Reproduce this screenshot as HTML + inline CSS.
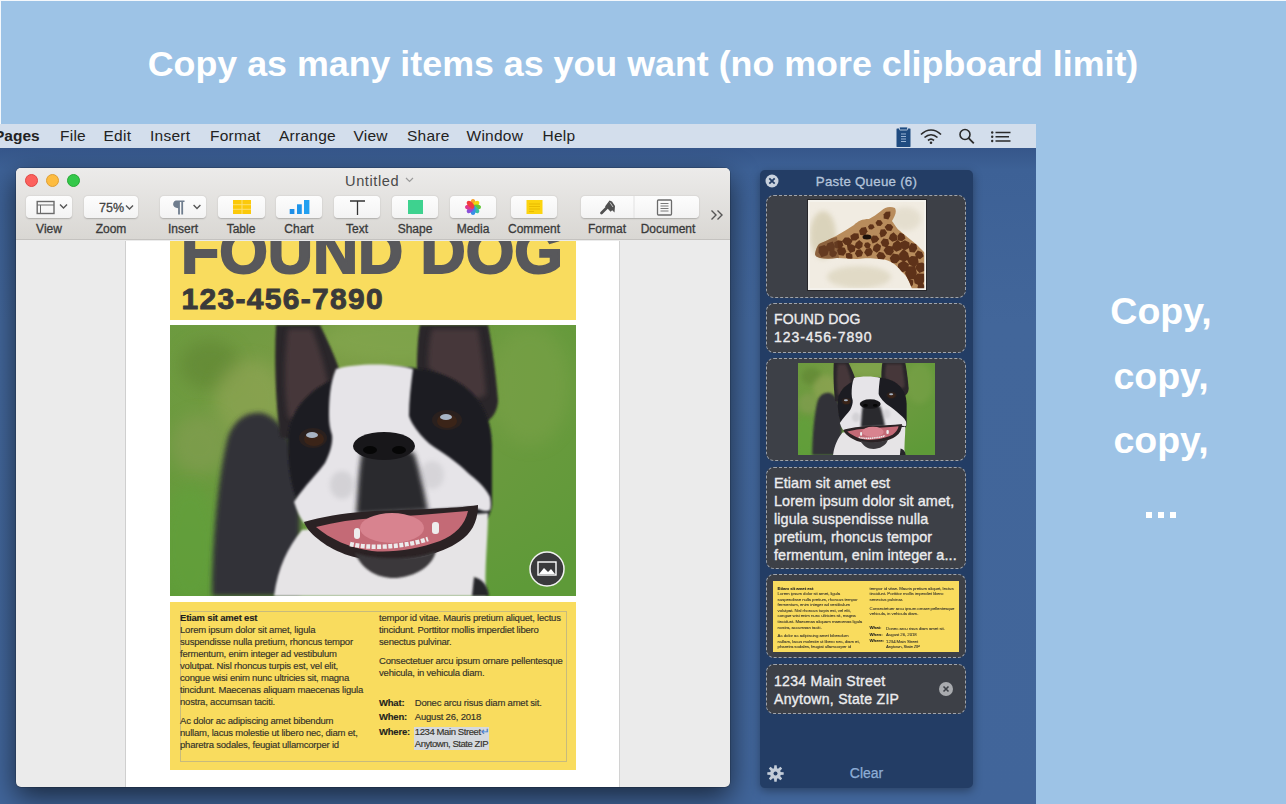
<!DOCTYPE html>
<html><head><meta charset="utf-8">
<style>
*{margin:0;padding:0;box-sizing:border-box}
html,body{width:1286px;height:804px;overflow:hidden}
body{position:relative;background:#9dc3e6;font-family:"Liberation Sans",sans-serif;}
#wl{position:absolute;left:0;top:0;width:1px;height:804px;background:#f4f8fc}#wt{position:absolute;left:0;top:0;width:1286px;height:1px;background:#f4f8fc}
.abs{position:absolute}
.ytxt{position:absolute;font-size:9.5px;letter-spacing:-0.2px;line-height:12px;color:#34322a;white-space:nowrap;-webkit-text-stroke:0.15px #34322a;margin-top:0.8px}
.ytxt b{color:#1c1c1c}
.ptxt{position:absolute;left:7px;font-size:14.4px;line-height:18.2px;color:#ececee;white-space:nowrap;letter-spacing:0.1px;-webkit-text-stroke:0.35px #ececee}

.tl{position:absolute;top:6px;width:13px;height:13px;border-radius:50%;border:0.5px solid}
.ttl{position:absolute;left:329px;top:5px;white-space:nowrap;font-size:14.6px;letter-spacing:0.6px;color:#4a4a4a;line-height:16px}
.btn{position:absolute;top:28px;height:22px;border-radius:4px;background:linear-gradient(180deg,#fdfdfd,#f3f3f3);box-shadow:0 0.5px 1.5px rgba(0,0,0,.22)}
.btn svg{display:block}
.btxt{position:absolute;top:3px;font-size:12.5px;color:#444;line-height:16px}
.lbl{position:absolute;top:54px;width:0;white-space:nowrap;font-size:12px;color:#3a3a3a;-webkit-text-stroke:0.3px #3a3a3a;line-height:14px;display:flex;justify-content:center}

#title{position:absolute;left:0;top:42px;width:1286px;text-align:center;color:#fff;font-weight:bold;font-size:35.8px;line-height:44px}
#screen{position:absolute;left:0;top:124px;width:1036px;height:680px;background:linear-gradient(180deg,#36568a 24px,#3d6196 46px,#42669a 200px,#41659a 100%)}
#menubar{position:absolute;left:0;top:0;width:1036px;height:24px;background:#d3deec;color:#222;font-size:15.5px;letter-spacing:0.25px;line-height:24px}
#menubar span{position:absolute;top:0}
#win{position:absolute;left:16px;top:44px;width:714px;height:619px;border-radius:5px;background:#ebebeb;overflow:hidden;box-shadow:0 10px 28px rgba(0,0,0,.6),0 0 0 0.5px rgba(0,0,0,.3)}
#tb{position:absolute;left:0;top:0;width:714px;height:72px;background:linear-gradient(180deg,#ecebea,#d9d7d3);border-bottom:1px solid #c4c2bf}
#page{position:absolute;left:109px;top:73px;width:495px;height:546px;background:#fff;overflow:hidden;border-left:1px solid #cfcfcf;border-right:1px solid #d2d2d2}
#pq{position:absolute;left:760px;top:46px;width:213px;height:618px;background:#233d65;border-radius:5px;box-shadow:0 3px 10px rgba(0,0,0,.35)}
.card{position:absolute;left:6px;width:200px;background:#3d4047;border:1px dashed #a0a4ab;border-radius:8px}
.rt{position:absolute;left:1061px;width:200px;text-align:center;color:#fff;font-weight:bold;font-size:37.5px;line-height:44px}
</style></head><body>
<svg width="0" height="0" style="position:absolute">
<defs>
<filter id="bl8" x="-30%" y="-30%" width="160%" height="160%"><feGaussianBlur stdDeviation="8"/></filter>
<filter id="bl3" x="-30%" y="-30%" width="160%" height="160%"><feGaussianBlur stdDeviation="2.5"/></filter>
<filter id="bl1"><feGaussianBlur stdDeviation="1"/></filter>
<radialGradient id="grass" cx="0.4" cy="0.2" r="0.9"><stop offset="0" stop-color="#7c9c46"/><stop offset="0.55" stop-color="#6a9a3e"/><stop offset="1" stop-color="#5e9a38"/></radialGradient>
<g id="dogimg">
  <rect width="406" height="271" fill="url(#grass)"/>
  <ellipse cx="40" cy="40" rx="30" ry="25" fill="#5e8432" opacity=".6" filter="url(#bl8)"/><ellipse cx="80" cy="75" rx="35" ry="40" fill="#93a656" opacity=".6" filter="url(#bl8)"/><ellipse cx="30" cy="120" rx="30" ry="30" fill="#8a9e56" opacity=".5" filter="url(#bl8)"/>
  <ellipse cx="230" cy="15" rx="80" ry="25" fill="#8aab52" opacity=".5" filter="url(#bl8)"/>
  <ellipse cx="360" cy="60" rx="40" ry="60" fill="#7ca24a" opacity=".5" filter="url(#bl8)"/>
  <ellipse cx="20" cy="220" rx="30" ry="60" fill="#62a03a" opacity=".7" filter="url(#bl8)"/>
  <!-- blurred body -->
  <path d="M42 271 C42 220 48 150 58 112 C64 94 78 86 92 88 C110 92 126 118 130 150 L130 271Z" fill="#323238" filter="url(#bl3)"/>
  
  <!-- ears -->
  <path d="M106 0 L150 0 C160 20 168 40 172 52 L166 92 C150 108 128 118 110 112 C106 80 104 40 106 0Z" fill="#29252a" filter="url(#bl1)"/>
  <path d="M118 4 L142 4 C150 25 156 45 158 60 L152 88 C140 96 126 98 118 92 C114 65 114 35 118 4Z" fill="#4c3b3d" opacity=".85" filter="url(#bl3)"/>
  <path d="M250 0 L318 0 C322 20 326 50 328 76 C327 88 322 93 316 97 L247 44 C247 25 248 10 250 0Z" fill="#29252a" filter="url(#bl1)"/>
  <path d="M262 4 L308 4 C312 28 315 50 316 70 L296 78 L258 42 C258 28 259 15 262 4Z" fill="#4c3b3d" opacity=".85" filter="url(#bl3)"/>
  <!-- head black -->
  <path d="M118 120 C116 80 150 44 225 42 C290 42 322 75 322 120 L322 180 C320 190 318 195 310 196 L150 202 C128 192 118 160 118 120Z" fill="#1f1e22" filter="url(#bl1)"/>
  <!-- chest white -->
  <path d="M104 271 C108 242 118 222 132 205 L318 188 C318 215 314 245 316 271Z" fill="#e6e4e6" filter="url(#bl1)"/>
  <path d="M304 252 C312 254 318 260 319 271 L302 271Z" fill="#25252a" filter="url(#bl1)"/>
  <!-- white blaze + muzzle -->
  <path d="M166 44 C185 38 225 38 243 44 C241 60 239 75 239 91 C241 97 244 101 246 104 C252 112 258 118 264 122 C280 132 290 140 297 147 C306 155 314 160 320 172 C321 178 321 182 320 185 C316 188 310 184 300 182 L203 188 L134 198 C128 190 126 182 124 177 C135 160 148 148 155 138 C160 128 163 118 162 110 C160 104 159 98 159 91 C159 75 160 58 166 44Z" fill="#e6e4e8" filter="url(#bl1)"/>
  <!-- dark snout center -->
  <path d="M192 126 C204 122 234 122 244 128 C250 145 254 165 258 186 L186 190 C188 168 188 148 192 126Z" fill="#2a292d" filter="url(#bl3)"/>
  <ellipse cx="172" cy="160" rx="12" ry="14" fill="#a8a8ac" opacity=".3" filter="url(#bl3)"/>
  <ellipse cx="262" cy="150" rx="12" ry="14" fill="#a8a8ac" opacity=".25" filter="url(#bl3)"/>
  <!-- nose -->
  <ellipse cx="214" cy="121" rx="31" ry="14" fill="#18171a"/>
  <ellipse cx="200" cy="125" rx="7" ry="4" fill="#060606"/><ellipse cx="229" cy="125" rx="7" ry="4" fill="#060606"/>
  <!-- eyes -->
  <ellipse cx="143" cy="113" rx="14" ry="10" fill="#2a201e"/><ellipse cx="144" cy="114" rx="10" ry="7" fill="#3b2418"/><ellipse cx="142" cy="110" rx="6" ry="3" fill="#a8b4c4"/>
  <ellipse cx="277" cy="95" rx="15" ry="10" fill="#2a201e"/><ellipse cx="277" cy="96" rx="10" ry="7" fill="#3b2418"/><ellipse cx="276" cy="92" rx="6" ry="3" fill="#a8b4c4"/>
  <!-- mouth -->
  <path d="M134 197 C150 192 175 188 192 187 C215 185 240 185 260 184 C280 183 295 182 308 180 C308 196 302 208 290 216 C270 230 240 236 210 236 C185 235 162 226 148 214 C140 208 136 202 134 197Z" fill="#2b2224"/>
  <path d="M146 202 C165 197 185 194 205 193 C235 191 265 189 298 186 C295 200 285 210 270 216 C248 224 222 228 202 226 C180 223 160 214 146 202Z" fill="#c46a76"/>
  <ellipse cx="222" cy="203" rx="32" ry="15" fill="#d8838f"/>
  <path d="M180 219 C200 224 235 222 258 214" stroke="#ecebec" stroke-width="4.5" fill="none" stroke-dasharray="4 1.5"/>
  <rect x="262" y="197" width="7" height="12" rx="3" fill="#eeeded"/><rect x="184" y="203" width="6" height="11" rx="3" fill="#eeeded"/>
  <path d="M185 228 C210 236 248 234 266 226 C262 244 240 253 224 253 C206 253 192 244 185 228Z" fill="#3b383b" filter="url(#bl1)"/>
</g>
<g id="girimg">
  <rect width="116" height="88" fill="#f1ece2"/>
  <ellipse cx="14" cy="34" rx="13" ry="24" fill="#c9c09c" opacity=".55" filter="url(#bl3)"/>
  <ellipse cx="50" cy="76" rx="32" ry="11" fill="#d4ccb0" opacity=".55" filter="url(#bl3)"/>
  <ellipse cx="96" cy="18" rx="16" ry="12" fill="#ddd6c2" opacity=".6" filter="url(#bl3)"/>
  <clipPath id="gclip"><path d="M6 53 C7 47 9 43 12 42 C18 40 22 37 27 35 C34 31 40 27 45 24 C49 20 53 18 60 18 C64 16 68 13 72 10 C76 6 81 5 86 7 C88 11 86 15 83 20 C86 24 88 28 91 30 C96 34 102 39 108 44 C112 48 114 50 116 52 L116 88 L103 88 C100 79 97 74 93 71 C89 66 86 63 82 61 C78 59 75 58 70 58 C62 57 56 57 48 58 C40 58 34 57 28 57 C22 58 16 58 11 57 C8 56 6 55 6 53Z"/></clipPath>
  <g clip-path="url(#gclip)">
  <rect width="116" height="88" fill="#b88c5c"/>
  <g fill="#5e3219"><polygon points="9.6,45.7 15.5,43.9 20.3,48.2 18.4,54.3 12.4,56.3 9.6,51.2"/><polygon points="16.4,47.2 18.5,42.2 23.7,40.6 26.0,45.1 25.3,49.6 20.7,50.2"/><polygon points="25.1,41.6 29.0,39.2 33.1,40.0 34.3,44.2 31.4,48.5 26.1,46.8"/><polygon points="41.0,44.6 36.1,43.7 32.9,40.2 35.8,36.5 39.8,36.5 43.6,39.7"/><polygon points="46.9,39.6 42.4,39.5 41.3,34.7 45.0,32.3 49.5,32.5 50.1,37.1"/><polygon points="52.4,26.7 56.8,25.9 58.5,30.3 56.2,34.5 51.3,34.0 50.1,29.7"/><polygon points="60.1,28.3 59.0,25.5 61.0,23.3 64.1,23.5 65.6,26.6 63.0,28.6"/><polygon points="68.6,19.1 71.8,19.3 73.9,22.3 71.5,25.1 68.2,24.7 66.5,21.8"/><polygon points="77.0,10.7 81.4,10.4 81.3,14.8 79.3,18.4 74.7,17.5 74.7,13.2"/><polygon points="24.9,49.1 28.2,51.8 26.5,55.3 23.2,56.3 20.5,54.0 20.4,49.6"/><polygon points="34.6,54.7 29.6,54.0 27.8,49.0 31.6,46.0 35.8,46.8 37.4,50.8"/><polygon points="42.6,43.3 46.6,45.2 45.9,50.2 41.2,52.1 38.6,48.3 37.9,43.7"/><polygon points="53.3,46.1 49.8,48.4 45.6,46.2 46.7,41.9 50.2,39.1 53.8,42.0"/><polygon points="56.8,47.0 55.0,44.4 56.2,41.7 59.1,41.2 61.7,43.5 60.6,47.3"/><polygon points="67.8,40.9 63.6,42.4 61.7,38.1 63.9,34.6 67.8,34.7 70.4,37.9"/><polygon points="75.9,28.3 78.1,31.8 75.9,34.9 71.8,36.4 70.6,32.2 71.7,28.5"/><polygon points="81.8,23.2 84.3,26.1 82.2,30.1 77.8,29.5 75.6,25.9 78.4,23.1"/><polygon points="37.1,56.3 36.7,52.5 40.4,51.7 43.3,53.6 43.5,57.6 39.5,59.1"/><polygon points="54.1,51.4 52.6,55.3 48.3,56.3 45.9,52.6 47.6,49.0 51.5,48.2"/><polygon points="62.4,54.2 58.1,55.6 55.1,51.6 57.3,47.5 61.6,47.1 63.9,50.5"/><polygon points="71.2,49.0 67.8,51.7 63.7,49.3 64.6,44.9 68.2,42.3 72.1,44.8"/><polygon points="74.4,37.5 79.2,38.2 80.2,42.7 77.7,46.6 73.4,45.1 71.6,41.2"/><polygon points="84.6,31.2 87.8,34.4 88.2,39.2 83.4,40.7 79.7,37.8 81.1,33.8"/><polygon points="88.4,34.9 91.0,31.6 95.0,33.2 96.5,37.4 93.0,40.3 88.6,39.2"/><polygon points="69.4,58.6 67.4,54.6 70.0,50.7 74.3,51.8 76.8,55.4 74.0,59.4"/><polygon points="77.8,44.6 83.5,45.4 84.9,50.7 81.9,54.6 77.4,53.4 74.5,49.3"/><polygon points="92.9,43.0 92.6,48.5 87.3,50.7 82.6,47.2 84.3,42.2 88.7,39.1"/><polygon points="91.4,41.5 95.9,39.3 100.4,41.4 100.8,46.6 96.1,49.2 91.4,46.7"/><polygon points="108.2,47.7 105.6,51.5 100.7,51.0 99.7,46.2 102.2,42.1 107.3,43.0"/><polygon points="114.7,55.3 111.1,58.2 107.2,56.8 106.0,52.9 108.8,49.6 113.0,51.0"/><polygon points="87.6,62.3 82.5,62.3 80.7,57.1 84.0,52.5 89.7,53.5 90.9,58.8"/><polygon points="99.1,52.1 100.5,57.6 95.5,60.7 90.0,58.5 90.2,52.7 94.4,47.9"/><polygon points="100.4,63.7 97.6,58.3 102.6,54.9 108.5,55.4 109.7,61.5 105.7,66.3"/><polygon points="118.1,64.3 115.8,69.8 110.4,72.1 106.3,67.6 108.2,62.3 113.2,61.4"/><polygon points="89.3,62.8 94.5,59.4 100.0,63.1 98.8,69.3 93.6,71.3 88.2,68.8"/><polygon points="107.9,72.0 105.6,78.2 98.3,78.3 96.0,72.0 98.4,65.6 106.1,65.0"/><polygon points="105.6,82.3 104.6,76.5 108.5,72.4 115.3,72.7 115.8,79.6 111.9,85.2"/><polygon points="104.4,79.4 103.9,84.1 100.1,87.8 95.8,84.5 95.9,79.7 99.9,77.5"/><polygon points="116.2,85.6 114.2,89.1 110.3,89.8 108.5,86.4 109.4,82.4 113.7,82.3"/></g>
  <path d="M4 40 L28 36 L30 58 L4 58Z" fill="#6a4228" opacity=".55"/>
  </g>
  <ellipse cx="58" cy="36" rx="4.5" ry="2.5" fill="#1a100a"/>
  <rect x="0" y="0" width="116" height="88" fill="none" stroke="#f5f3ee" stroke-width="1.5"/>
</g>

</defs></svg>
<div id="wl"></div><div id="wt"></div>
<div id="title">Copy as many items as you want (no more clipboard limit)</div>

<div id="screen">
  <div id="menubar">
    <span style="left:-6px;font-weight:bold;letter-spacing:0">Pages</span>
    <span style="left:60px">File</span>
    <span style="left:103.5px">Edit</span>
    <span style="left:150px">Insert</span>
    <span style="left:210px">Format</span>
    <span style="left:279px">Arrange</span>
    <span style="left:353.5px">View</span>
    <span style="left:407px">Share</span>
    <span style="left:466.5px">Window</span>
    <span style="left:542.5px">Help</span>
    <svg class="abs" style="left:895px;top:1px" width="18" height="22">
      <rect x="1.5" y="3.5" width="14" height="18.5" rx="0.4" fill="#1f4b80"/>
      <rect x="4.5" y="2" width="8" height="3" rx="0.5" fill="#1f4b80" stroke="#d3deec" stroke-width="0.8"/>
      <path d="M6 9H11M6 11.5H11M6 14H11M6 16.5H11" stroke="#9ab4d4" stroke-width="1.1"/>
    </svg>
    <svg class="abs" style="left:919px;top:3px" width="24" height="18">
      <path d="M2 7.5C8 1.5 16 1.5 22 7.5" stroke="#2a2a2a" stroke-width="1.7" fill="none"/>
      <path d="M5.5 10.5C9.5 6.8 14.5 6.8 18.5 10.5" stroke="#2a2a2a" stroke-width="1.7" fill="none"/>
      <path d="M9 13.5C11 11.8 13 11.8 15 13.5" stroke="#2a2a2a" stroke-width="1.7" fill="none"/>
      <circle cx="12" cy="15.8" r="1.3" fill="#2a2a2a"/>
    </svg>
    <svg class="abs" style="left:958px;top:3px" width="18" height="18">
      <circle cx="7" cy="7.5" r="5" stroke="#2a2a2a" stroke-width="1.6" fill="none"/>
      <path d="M10.6 11.1L15.8 16.3" stroke="#2a2a2a" stroke-width="1.8"/>
    </svg>
    <svg class="abs" style="left:990px;top:6px" width="22" height="13">
      <circle cx="2.2" cy="2.5" r="1.2" fill="#2a2a2a"/><circle cx="2.2" cy="6.8" r="1.2" fill="#2a2a2a"/><circle cx="2.2" cy="11" r="1.2" fill="#2a2a2a"/>
      <path d="M5.5 2.5H20.5M5.5 6.8H19M5.5 11H20.5" stroke="#2a2a2a" stroke-width="1.6"/>
    </svg>
  </div>
  <div id="win">
    <div id="tb">
      <div class="tl" style="left:9px;background:#fc615d;border-color:#df4744"></div>
      <div class="tl" style="left:30px;background:#fdbc40;border-color:#de9f34"></div>
      <div class="tl" style="left:51px;background:#34c84a;border-color:#27aa35"></div>
      <div class="ttl">Untitled<svg width="9" height="6" style="margin-left:6px;vertical-align:3px"><path d="M1 1L4.5 4.5L8 1" stroke="#9a9a9a" stroke-width="1.2" fill="none"/></svg></div>
      <div class="btn" style="left:10px;width:46px"><svg width="46" height="22"><rect x="11.2" y="5.5" width="16.8" height="12" fill="none" stroke="#6b6b6b" stroke-width="1.4"/><line x1="11" y1="9" x2="28" y2="9" stroke="#6b6b6b" stroke-width="1.1"/><line x1="14.5" y1="9" x2="14.5" y2="17.5" stroke="#6b6b6b" stroke-width="1"/><path d="M34 8.5L37.5 12L41 8.5" stroke="#555" stroke-width="1.4" fill="none"/></svg></div>
      <div class="btn" style="left:68px;width:54px"><span class="btxt" style="left:15px;top:4px;-webkit-text-stroke:0.3px #444">75%</span><svg width="54" height="22" style="position:absolute;left:0;top:0"><path d="M42 9.5L45.5 13L49 9.5" stroke="#555" stroke-width="1.4" fill="none"/></svg></div>
      <div class="btn" style="left:144px;width:46px"><svg width="46" height="22"><path transform="translate(-2.5,0)" d="M18.5 4.5H27V6H25.6V18.5H23.8V6H22.4V18.5H20.6V12.2C17.6 12.2 15.6 10.6 15.6 8.3C15.6 6 17.4 4.5 18.5 4.5Z" fill="#6f7d8e"/><path d="M33.6 9L37 12.4L40.4 9" stroke="#555" stroke-width="1.4" fill="none"/></svg></div>
      <div class="btn" style="left:202px;width:47px"><svg width="47" height="22"><rect x="15" y="4" width="18" height="14" fill="#fbc90a"/><path d="M15 8.7H33M15 13.3H33M24 4V18" stroke="#fde070" stroke-width="1"/></svg></div>
      <div class="btn" style="left:260px;width:46px"><svg width="46" height="22"><rect x="13.7" y="13" width="4.7" height="5" fill="#1e8ee6"/><rect x="21" y="8.3" width="4.8" height="9.7" fill="#1f95ea"/><rect x="28" y="4" width="5.4" height="14" fill="#22a0f0"/></svg></div>
      <div class="btn" style="left:318px;width:46px"><svg width="46" height="22"><path d="M16 5H31M23.5 5V19" stroke="#333" stroke-width="1.3" fill="none"/></svg></div>
      <div class="btn" style="left:376px;width:46px"><svg width="46" height="22"><rect x="16" y="4" width="15" height="14" fill="#3ed28f"/></svg></div>
      <div class="btn" style="left:434px;width:46px"><svg width="46" height="22"><g transform="translate(23,11)"><circle r="7.5" fill="#fff"/><ellipse rx="2.6" ry="4.5" cy="-3.5" fill="#f6a12c" transform="rotate(0)"/><ellipse rx="2.6" ry="4.5" cy="-3.5" fill="#f2d70c" transform="rotate(45)"/><ellipse rx="2.6" ry="4.5" cy="-3.5" fill="#62c63a" transform="rotate(90)"/><ellipse rx="2.6" ry="4.5" cy="-3.5" fill="#38c2a4" transform="rotate(135)"/><ellipse rx="2.6" ry="4.5" cy="-3.5" fill="#3a8ee8" transform="rotate(180)"/><ellipse rx="2.6" ry="4.5" cy="-3.5" fill="#8a50d8" transform="rotate(225)"/><ellipse rx="2.6" ry="4.5" cy="-3.5" fill="#e0388c" transform="rotate(270)"/><ellipse rx="2.6" ry="4.5" cy="-3.5" fill="#f23c3c" transform="rotate(315)"/></g></svg></div>
      <div class="btn" style="left:495px;width:46px"><svg width="46" height="22"><rect x="15.5" y="4" width="16" height="14" fill="#fcd40f"/><path d="M18 8H29M18 10.5H29M18 13H29M18 15.5H23" stroke="#e6b800" stroke-width="0.9"/></svg></div>
      <div class="btn" style="left:565px;width:118px"><svg width="118" height="22"><line x1="53" y1="0" x2="53" y2="22" stroke="#e2e2e2" stroke-width="1"/><path d="M20.5 17L25.5 12" stroke="#505050" stroke-width="2.8" stroke-linecap="round"/><path d="M24 10.5L28.5 4.5L31 5.5L34 10L33.5 16.5L31.2 14.2L29.6 15.8L27 13Z" fill="#505050"/><path d="M29 6.5L32 11" stroke="#f6f6f6" stroke-width="0.7"/><rect x="76.5" y="4" width="14" height="15" fill="none" stroke="#6b6b6b" stroke-width="1.3" rx="1"/><path d="M79.5 7.5H87.5M79.5 10H87.5M79.5 12.5H87.5M79.5 15H87.5" stroke="#6b6b6b" stroke-width="0.9"/></svg></div>
      <svg class="abs" style="left:694px;top:41px" width="16" height="13"><path d="M1.5 1.5L6 6L1.5 10.5M7.5 1.5L12 6L7.5 10.5" stroke="#555" stroke-width="1.4" fill="none"/></svg>
      <div class="lbl" style="left:33px">View</div>
      <div class="lbl" style="left:95px">Zoom</div>
      <div class="lbl" style="left:167px">Insert</div>
      <div class="lbl" style="left:225px">Table</div>
      <div class="lbl" style="left:283px">Chart</div>
      <div class="lbl" style="left:341px">Text</div>
      <div class="lbl" style="left:399px">Shape</div>
      <div class="lbl" style="left:457px">Media</div>
      <div class="lbl" style="left:518px">Comment</div>
      <div class="lbl" style="left:591px">Format</div>
      <div class="lbl" style="left:652px">Document</div>
    </div>
    <div id="page">
      <div class="abs" style="left:44px;top:-20px;width:406px;height:99px;background:#f9dc5e"></div>
      <div class="abs" style="left:55px;top:-25px;font-size:62.5px;font-weight:bold;color:#58585b;-webkit-text-stroke:2px #58585b;line-height:70px;white-space:nowrap">FOUND DOG</div>
      <div class="abs" style="left:55.5px;top:41px;font-size:30px;font-weight:bold;letter-spacing:1.3px;color:#3a3a3a;-webkit-text-stroke:0.9px #3a3a3a;line-height:34px;white-space:nowrap">123-456-7890</div>
      <div class="abs" style="left:44px;top:84px;width:406px;height:271px;overflow:hidden"><svg width="406" height="271"><use href="#dogimg"/><!-- image badge -->
  <circle cx="377" cy="244" r="17" fill="#3a3a3c" stroke="#f2f2f2" stroke-width="1.5"/>
  <rect x="368" y="237" width="18" height="13" fill="none" stroke="#fff" stroke-width="1.4"/>
  <path d="M369 249 L374 243 L378 247 L381 244 L385 249Z" fill="#fff"/>
</svg></div>
      <div class="abs" style="left:44px;top:361px;width:406px;height:168px;background:#f9dc5e">
        <div class="abs" style="left:10px;top:9px;width:387px;height:151px;border:1px solid #c8bb7c"></div>
        <div class="ytxt" style="left:10px;top:9px;width:200px">
          <b>Etiam sit amet est</b><br>Lorem ipsum dolor sit amet, ligula<br>suspendisse nulla pretium, rhoncus tempor<br>fermentum, enim integer ad vestibulum<br>volutpat. Nisl rhoncus turpis est, vel elit,<br>congue wisi enim nunc ultricies sit, magna<br>tincidunt. Maecenas aliquam maecenas ligula<br>nostra, accumsan taciti.
        </div>
        <div class="ytxt" style="left:10px;top:112.7px;width:200px">Ac dolor ac adipiscing amet bibendum<br>nullam, lacus molestie ut libero nec, diam et,<br>pharetra sodales, feugiat ullamcorper id</div>
        <div class="ytxt" style="left:209px;top:9px;width:200px">tempor id vitae. Mauris pretium aliquet, lectus<br>tincidunt. Porttitor mollis imperdiet libero<br>senectus pulvinar.</div>
        <div class="ytxt" style="left:209px;top:52px;width:200px">Consectetuer arcu ipsum ornare pellentesque<br>vehicula, in vehicula diam.</div>
        <div class="abs" style="left:244px;top:124.5px;width:75px;height:23px;background:#d5d9de"></div>
        <div class="ytxt" style="left:209px;top:93.3px;line-height:14.35px"><b>What:</b><br><b>When:</b><br><b>Where:</b></div>
        <div class="ytxt" style="left:244.8px;top:93.3px;line-height:14.35px">Donec arcu risus diam amet sit.<br>August 26, 2018<br><span style="letter-spacing:-0.4px">1234 Main Street</span><span style="color:#3b82e0;letter-spacing:-1px">&#8629;</span></div>
        <div class="ytxt" style="left:244.8px;top:135px;letter-spacing:-0.45px">Anytown, State ZIP</div>
      </div>
    </div>
  </div>
  <div id="pq">
    <svg class="abs" style="left:5px;top:4px" width="14" height="14"><circle cx="7" cy="7" r="6.5" fill="#c9d2de"/><path d="M4.3 4.3L9.7 9.7M9.7 4.3L4.3 9.7" stroke="#233d65" stroke-width="1.8"/></svg>
    <div class="abs" style="left:0;top:3.5px;width:213px;text-align:center;font-size:13.3px;letter-spacing:0.25px;line-height:16px;color:#b4c4da;-webkit-text-stroke:0.3px #b4c4da">Paste Queue (6)</div>
    <div class="card" style="top:25px;height:103px"><div class="abs" style="left:41px;top:4px;width:118px;height:90px;background:#f4f2ec;padding:1px 1px;box-shadow:0 0 0 1px #26262a"><svg width="116" height="88" style="display:block"><use href="#girimg"/></svg></div></div>
    <div class="card" style="top:133px;height:50px"><div class="ptxt" style="top:6px;font-size:14px;line-height:18px">FOUND DOG<br><span style="letter-spacing:0.95px">123-456-7890</span></div></div>
    <div class="card" style="top:188px;height:103px"><div class="abs" style="left:31px;top:4px;width:137px;height:92px;overflow:hidden"><svg width="137" height="92" viewBox="0 0 406 271" preserveAspectRatio="none"><use href="#dogimg"/></svg></div></div>
    <div class="card" style="top:297px;height:102px"><div class="ptxt" style="top:5.5px">Etiam sit amet est<br>Lorem ipsum dolor sit amet,<br>ligula suspendisse nulla<br>pretium, rhoncus tempor<br>fermentum, enim integer a...</div></div>
    <div class="card" style="top:404px;height:84px"><div class="abs" style="left:6px;top:6px;width:186px;height:71px;background:#f9dc5e;overflow:hidden"><div class="abs" style="left:0;top:0;width:406px;height:168px;transform:scale(0.462);transform-origin:0 0"><div class="ytxt" style="left:10px;top:9px;width:200px">
          <b>Etiam sit amet est</b><br>Lorem ipsum dolor sit amet, ligula<br>suspendisse nulla pretium, rhoncus tempor<br>fermentum, enim integer ad vestibulum<br>volutpat. Nisl rhoncus turpis est, vel elit,<br>congue wisi enim nunc ultricies sit, magna<br>tincidunt. Maecenas aliquam maecenas ligula<br>nostra, accumsan taciti.
        </div>
        <div class="ytxt" style="left:10px;top:112.7px;width:200px">Ac dolor ac adipiscing amet bibendum<br>nullam, lacus molestie ut libero nec, diam et,<br>pharetra sodales, feugiat ullamcorper id</div>
        <div class="ytxt" style="left:209px;top:9px;width:200px">tempor id vitae. Mauris pretium aliquet, lectus<br>tincidunt. Porttitor mollis imperdiet libero<br>senectus pulvinar.</div>
        <div class="ytxt" style="left:209px;top:52px;width:200px">Consectetuer arcu ipsum ornare pellentesque<br>vehicula, in vehicula diam.</div>
        
        <div class="ytxt" style="left:209px;top:93.3px;line-height:14.35px"><b>What:</b><br><b>When:</b><br><b>Where:</b></div>
        <div class="ytxt" style="left:244.8px;top:94.3px;line-height:14.4px">Donec arcu risus diam amet sit.<br>August 26, 2018<br>1234 Main Street</div>
        <div class="ytxt" style="left:244.8px;top:135px;letter-spacing:-0.45px">Anytown, State ZIP</div></div></div></div>
    <div class="card" style="top:494px;height:50px"><div class="ptxt" style="top:6.9px;font-size:14px;line-height:18px;letter-spacing:0.3px">1234 Main Street<br>Anytown, State ZIP</div><svg class="abs" style="left:172px;top:17px" width="14" height="14"><circle cx="7" cy="7" r="7" fill="#a9abaf"/><path d="M4.5 4.5L9.5 9.5M9.5 4.5L4.5 9.5" stroke="#3d4047" stroke-width="1.6"/></svg></div>
    <svg class="abs" style="left:7px;top:595px" width="17" height="17" viewBox="-8.5 -8.5 17 17"><g fill="#c3ccd8"><circle r="5.4"/><path d="M-1.2 -8.2H1.2L1.6 -4H-1.6Z" id="tooth"/><use href="#tooth" transform="rotate(45)"/><use href="#tooth" transform="rotate(90)"/><use href="#tooth" transform="rotate(135)"/><use href="#tooth" transform="rotate(180)"/><use href="#tooth" transform="rotate(225)"/><use href="#tooth" transform="rotate(270)"/><use href="#tooth" transform="rotate(315)"/></g><circle r="2" fill="#223c64"/></svg>
    <div class="abs" style="left:0;top:595px;width:213px;text-align:center;font-size:14px;line-height:16px;color:#8eaed6;-webkit-text-stroke:0.25px #8eaed6">Clear</div>
  </div>
</div>

<div class="rt" style="top:288.5px">Copy,</div>
<div class="rt" style="top:354px">copy,</div>
<div class="rt" style="top:418px">copy,</div>
<div class="abs" style="left:1146px;top:512px;width:5.5px;height:5.5px;background:#fff"></div><div class="abs" style="left:1158px;top:512px;width:5.5px;height:5.5px;background:#fff"></div><div class="abs" style="left:1170px;top:512px;width:5.5px;height:5.5px;background:#fff"></div>
</body></html>
